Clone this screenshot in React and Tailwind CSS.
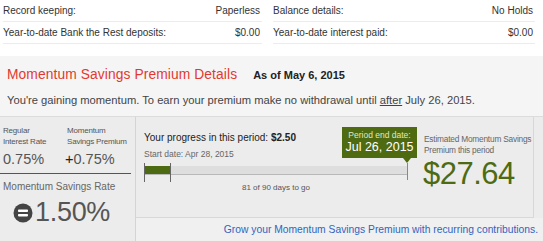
export default function App() {
  const top = [
    [
      ["Record keeping:", "Paperless"],
      ["Year-to-date Bank the Rest deposits:", "$0.00"],
    ],
    [
      ["Balance details:", "No Holds"],
      ["Year-to-date interest paid:", "$0.00"],
    ],
  ];

  return (
    <div className="w-[543px] h-[241px] overflow-hidden bg-white font-['Liberation_Sans',Arial,sans-serif] text-[#333]">
      {/* account summary */}
      <div className="h-[56px] grid grid-cols-[259px_262px] gap-x-[11px] pl-[3px]">
        {top.map((col, i) => (
          <div key={i} className="flex flex-col">
            {col.map(([label, value]) => (
              <div
                key={label}
                className="h-[22px] flex items-center justify-between border-b border-[#ececec] text-[10px]"
              >
                <span>{label}</span>
                <span className="pr-[2px]">{value}</span>
              </div>
            ))}
          </div>
        ))}
      </div>

      {/* heading */}
      <div className="h-[60px] bg-[#f5f5f5] px-[7px] pt-[11px]">
        <div className="flex items-baseline">
          <span className="text-[13.8px] leading-[16px] text-[#e2392e] tracking-[0.1px]">
            Momentum Savings Premium Details
          </span>
          <span className="ml-[16px] text-[11px] font-bold text-[#222]">As of May 6, 2015</span>
        </div>
        <p className="mt-[9px] text-[11.2px] leading-[14px] text-[#444]">
          You're gaining momentum. To earn your premium make no withdrawal until{" "}
          <span className="underline">after</span> July 26, 2015.
        </p>
      </div>

      {/* premium panel */}
      <div className="h-[125px] flex bg-[#ececec] border-t border-[#dcdcdc]">
        <div className="w-[136px] shrink-0 border-r border-[#d4d4d4] pt-[8px]">
          <div className="flex pl-[3px] text-[8px] leading-[11px] text-[#555] tracking-[-0.2px]">
            <div className="w-[64px]">
              Regular
              <br />
              Interest Rate
            </div>
            <div>
              Momentum
              <br />
              Savings Premium
            </div>
          </div>
          <div className="flex pl-[3px] mt-[3px] text-[14.5px] leading-[18px] text-[#555]">
            <span className="w-[62px]">0.75%</span>
            <span>
              <span className="text-[#222]">+</span>0.75%
            </span>
          </div>
          <div className="mt-[5px] mr-[4px] border-t border-[#555]" />
          <div className="pl-[3px] mt-[6px] text-[10px] leading-[13px] text-[#666]">
            Momentum Savings Rate
          </div>
          <div className="flex items-center pl-[13px] mt-[3px]">
            <svg width="20" height="20" viewBox="0 0 20 20" className="mt-[2px]">
              <circle cx="10" cy="10" r="9.5" fill="#444" />
              <rect x="5" y="6.6" width="10" height="2.4" rx="0.8" fill="#fff" />
              <rect x="5" y="11" width="10" height="2.4" rx="0.8" fill="#fff" />
            </svg>
            <span className="ml-[2px] text-[27px] leading-[32px] text-[#555] tracking-[-0.3px]">1.50%</span>
          </div>
        </div>

        <div className="flex-1 flex flex-col">
          <div className="h-[101px] mr-[9px] border-r border-b border-[#d8d8d8] flex">
            <div className="w-[280px] shrink-0 pl-[8px] pt-[14px]">
              <div className="text-[10px] leading-[14px] text-[#222]">
                Your progress in this period: <span className="font-bold">$2.50</span>
              </div>
              <div className="mt-[4px] text-[8.5px] leading-[11px] text-[#666]">Start date: Apr 28, 2015</div>
              <div className="relative mt-[3px] w-[264px] h-[19px]">
                <div className="absolute left-0 top-[3px] w-[264px] h-[9px] bg-[#dedede] border-b border-[#b8b8b8]" />
                <div className="absolute left-0 top-[3px] w-[26px] h-[8px] bg-[#4b6a12]" />
                <div className="absolute left-0 top-0 w-px h-[19px] bg-[#666]" />
                <div className="absolute left-[26px] top-0 w-px h-[19px] bg-[#666]" />
                <div className="absolute left-[263px] top-0 w-px h-[17px] bg-[#888]" />
                <div className="absolute left-[198px] -top-[36px] w-[75px] h-[31px] bg-[#4f6b12] text-center pt-[3px]">
                  <div className="text-[8.5px] leading-[10px] text-[#dfe8c8]">Period end date:</div>
                  <div className="text-[12.5px] leading-[14px] text-white">Jul 26, 2015</div>
                  <div className="absolute left-[61px] top-[31px] w-0 h-0 border-l-[4px] border-r-[4px] border-t-[5px] border-l-transparent border-r-transparent border-t-[#4f6b12]" />
                </div>
              </div>
              <div className="w-[264px] text-center text-[8px] leading-[10px] text-[#555] mt-[1px]">
                81 of 90 days to go
              </div>
            </div>
            <div className="pt-[17px] pl-[8px] whitespace-nowrap">
              <div className="text-[8.3px] leading-[11px] text-[#666] tracking-[-0.2px]">
                Estimated Momentum Savings
                <br />
                Premium this period
              </div>
              <div className="-ml-[1px] mt-[1px] text-[31px] leading-[34px] text-[#4d6b12] tracking-[-0.5px]">
                $27.64
              </div>
            </div>
          </div>
          <div className="flex-1 flex items-center justify-end pr-[5px] bg-[#f0f0f0] text-[10.3px] text-[#2f64c0]">
            Grow your Momentum Savings Premium with recurring contributions.
          </div>
        </div>
      </div>
    </div>
  );
}
